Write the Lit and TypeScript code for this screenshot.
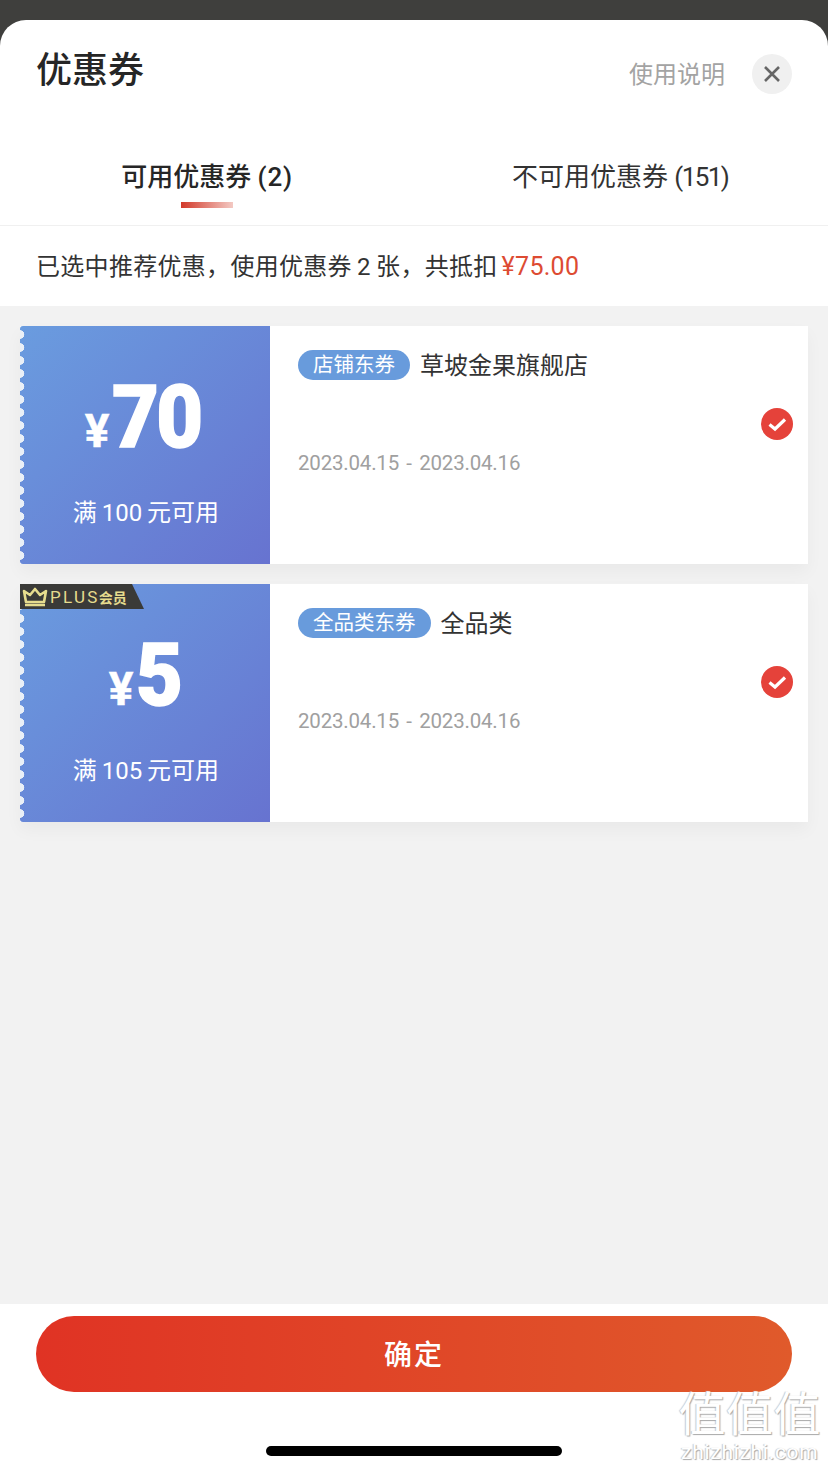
import { LitElement, html, css } from 'lit';
import { customElement } from 'lit/decorators.js';

const coupons = [
  { amount: '70', limit: '满\u2009100\u2009元可用', tag: '店铺东券', name: '草坡金果旗舰店', plus: false },
  { amount: '5', limit: '满\u2009105\u2009元可用', tag: '全品类东券', name: '全品类', plus: true },
];

@customElement('app-root')
export class AppRoot extends LitElement {
  static styles = css`
    :host {
      display: flex;
      flex-direction: column;
      position: relative;
      height: 1472px;
      overflow: hidden;
      background: #3f3f3d;
      font-family: 'Roboto', 'Noto Sans CJK SC', sans-serif;
      color: #262626;
    }
    .sheet {
      flex: 1;
      margin-top: 20px;
      display: flex;
      flex-direction: column;
      background: #fff;
      border-radius: 26px 26px 0 0;
      overflow: hidden;
    }
    .header {
      height: 118px;
      padding: 0 36px;
      display: flex;
      justify-content: space-between;
      align-items: flex-start;
    }
    .title {
      margin-top: 22px;
      font-size: 36px;
      line-height: 58px;
      font-weight: 500;
    }
    .header-right {
      display: flex;
      align-items: flex-start;
      gap: 27px;
      margin-top: 34px;
    }
    .help {
      margin-top: 1px;
      font-size: 24px;
      line-height: 40px;
      color: #a3a3a3;
    }
    .close {
      width: 40px;
      height: 40px;
      border-radius: 50%;
      background: #f0f0f0;
      display: flex;
      align-items: center;
      justify-content: center;
    }
    .tabs {
      height: 88px;
      box-sizing: border-box;
      display: grid;
      grid-template-columns: 414px 414px;
      border-bottom: 1px solid #f0f0f0;
    }
    .tab {
      display: flex;
      flex-direction: column;
      align-items: center;
      font-size: 26px;
      line-height: 40px;
      padding: 19px 2px 0 0;
      color: #333;
      white-space: pre;
    }
    .tab span {
      letter-spacing: -1.6px;
    }
    .tab.active {
      padding-right: 0;
      font-weight: 500;
      color: #262626;
    }
    .tab.active span {
      letter-spacing: 0.8px;
    }
    .tab.active::after {
      content: '';
      width: 52px;
      height: 6px;
      margin-top: 5px;
      background: linear-gradient(90deg, #d2392a, #f3c9c3);
    }
    .notice {
      height: 80px;
      display: flex;
      align-items: center;
      padding: 0 0 3px 36px;
      box-sizing: border-box;
      font-size: 24px;
      letter-spacing: 0.3px;
      color: #333;
    }
    .notice span {
      color: #dd4b32;
      font-size: 25px;
      letter-spacing: 0.3px;
      margin: 4px 0 0 4px;
    }
    .list {
      flex: 1;
      background: #f2f2f2;
      padding: 20px;
      display: flex;
      flex-direction: column;
      gap: 20px;
    }
    .coupon {
      height: 238px;
      display: flex;
      background: #fff;
      box-shadow: 0 8px 16px rgba(0, 0, 0, 0.04);
      position: relative;
    }
    .left {
      width: 250px;
      flex: none;
      position: relative;
      display: flex;
      flex-direction: column;
      align-items: center;
      background: linear-gradient(135deg, #6a9cdf, #6773d0);
      color: #fff;
      border-radius: 3px 0 0 3px;
    }
    .left::before {
      content: '';
      position: absolute;
      left: 0;
      top: 0;
      bottom: 0;
      width: 5px;
      background: radial-gradient(circle at 0 50%, #eaf0f7 4px, transparent 4.6px) 0 2px / 5px 13px repeat-y;
    }
    .amount {
      display: flex;
      align-items: baseline;
      height: 124px;
      margin-top: 29px;
      font-weight: 900;
      font-size: 88px;
      line-height: 124px;
      letter-spacing: -3px;
    }
    .amount small {
      font-size: 46px;
      font-weight: 700;
      margin-right: 3px;
      letter-spacing: 0;
      -webkit-text-stroke: 0.5px #fff;
    }
    .num {
      display: inline-block;
      transform: scaleX(0.92);
      transform-origin: left;
      margin-right: -3px;
      -webkit-text-stroke: 1.5px #fff;
    }
    .limit {
      margin-top: 16px;
      padding-left: 2px;
      font-size: 24px;
      line-height: 36px;
      white-space: pre;
    }
    .plus {
      position: absolute;
      top: 0;
      left: 0;
      width: 124px;
      height: 25px;
      display: flex;
      align-items: center;
      gap: 2px;
      padding-left: 2px;
      box-sizing: border-box;
      background: #3a3a38;
      clip-path: polygon(0 0, 112px 0, 100% 100%, 0 100%);
      font-size: 17px;
      letter-spacing: 2.3px;
      color: #e6dc8e;
    }
    .plus b {
      margin-left: -3px;
      font-size: 14px;
      letter-spacing: 0;
      font-weight: 700;
    }
    .right {
      flex: 1;
      padding: 24px 0 0 28px;
    }
    .head {
      display: flex;
      align-items: center;
      gap: 10px;
      height: 30px;
    }
    .tag {
      height: 30px;
      padding: 0 15px;
      border-radius: 15px;
      background: #689bdc;
      color: #fff;
      font-size: 20.5px;
      line-height: 30px;
    }
    .name {
      font-size: 24px;
      padding-bottom: 4px;
      color: #333;
    }
    .date {
      margin-top: 68px;
      font-size: 20.5px;
      line-height: 30px;
      letter-spacing: -0.2px;
      word-spacing: 2.5px;
      color: #a0a0a0;
    }
    .check {
      position: absolute;
      right: 15px;
      top: 82px;
      width: 32px;
      height: 32px;
    }
    .footer {
      height: 168px;
      display: flex;
      flex-direction: column;
      align-items: center;
      padding-top: 12px;
      box-sizing: border-box;
    }
    .confirm {
      width: 756px;
      height: 76px;
      padding-bottom: 2px;
      box-sizing: border-box;
      border-radius: 38px;
      background: linear-gradient(90deg, #e03324, #e05a2b);
      color: #fff;
      font-size: 28px;
      font-weight: 500;
      letter-spacing: 2px;
      display: flex;
      align-items: center;
      justify-content: center;
    }
    .home {
      width: 296px;
      height: 10px;
      margin-top: 54px;
      border-radius: 5px;
      background: #000;
    }
    .mark {
      position: absolute;
      right: 7px;
      bottom: 8px;
      display: flex;
      flex-direction: column;
      align-items: center;
      color: #fff;
      text-shadow: 1px 1px 1px #a8a8a8, -1px 0 1px #c8c8c8;
    }
    .mark .zh {
      font-size: 47px;
      line-height: 50px;
      letter-spacing: 0.5px;
    }
    .mark .en {
      font-size: 21px;
      line-height: 24px;
      letter-spacing: 0.7px;
    }
  `;

  private coupon(c: (typeof coupons)[number]) {
    return html`
      <div class="coupon">
        <div class="left">
          <div class="amount"><small>¥</small><span class="num">${c.amount}</span></div>
          <div class="limit">${c.limit}</div>
          ${c.plus
            ? html`<div class="plus">
                <svg width="26" height="20" viewBox="0 0 26 20" fill="none" stroke="#e6dc8e" stroke-width="2.6">
                  <path d="M4 15 2 4l6 4 5-6 5 6 6-4-2 11z" stroke-linejoin="round" />
                  <path d="M3 18h20" />
                </svg>
                PLUS<b>会员</b>
              </div>`
            : ''}
        </div>
        <div class="right">
          <div class="head">
            <span class="tag">${c.tag}</span>
            <span class="name">${c.name}</span>
          </div>
          <div class="date">2023.04.15 - 2023.04.16</div>
        </div>
        <svg class="check" viewBox="0 0 32 32">
          <circle cx="16" cy="16" r="16" fill="#e5423a" />
          <path d="M8.5 16.5l5.5 4.5L24 11.5" fill="none" stroke="#fff" stroke-width="3.2" />
        </svg>
      </div>
    `;
  }

  render() {
    return html`
      <div class="sheet">
        <div class="header">
          <div class="title">优惠券</div>
          <div class="header-right">
            <span class="help">使用说明</span>
            <span class="close">
              <svg width="18" height="18" viewBox="0 0 18 18">
                <path d="M2 2l14 14M16 2 2 16" stroke="#666" stroke-width="2.6" />
              </svg>
            </span>
          </div>
        </div>
        <div class="tabs">
          <div class="tab active"><div>可用优惠券 <span>(2)</span></div></div>
          <div class="tab"><div>不可用优惠券 <span>(151)</span></div></div>
        </div>
        <div class="notice">已选中推荐优惠，使用优惠券\u20092\u2009张，共抵扣<span>¥75.00</span></div>
        <div class="list">${coupons.map(c => this.coupon(c))}</div>
        <div class="footer">
          <div class="confirm">确定</div>
          <div class="home"></div>
        </div>
      </div>
      <div class="mark">
        <div class="zh">值值值</div>
        <div class="en">zhizhizhi.com</div>
      </div>
    `;
  }
}
